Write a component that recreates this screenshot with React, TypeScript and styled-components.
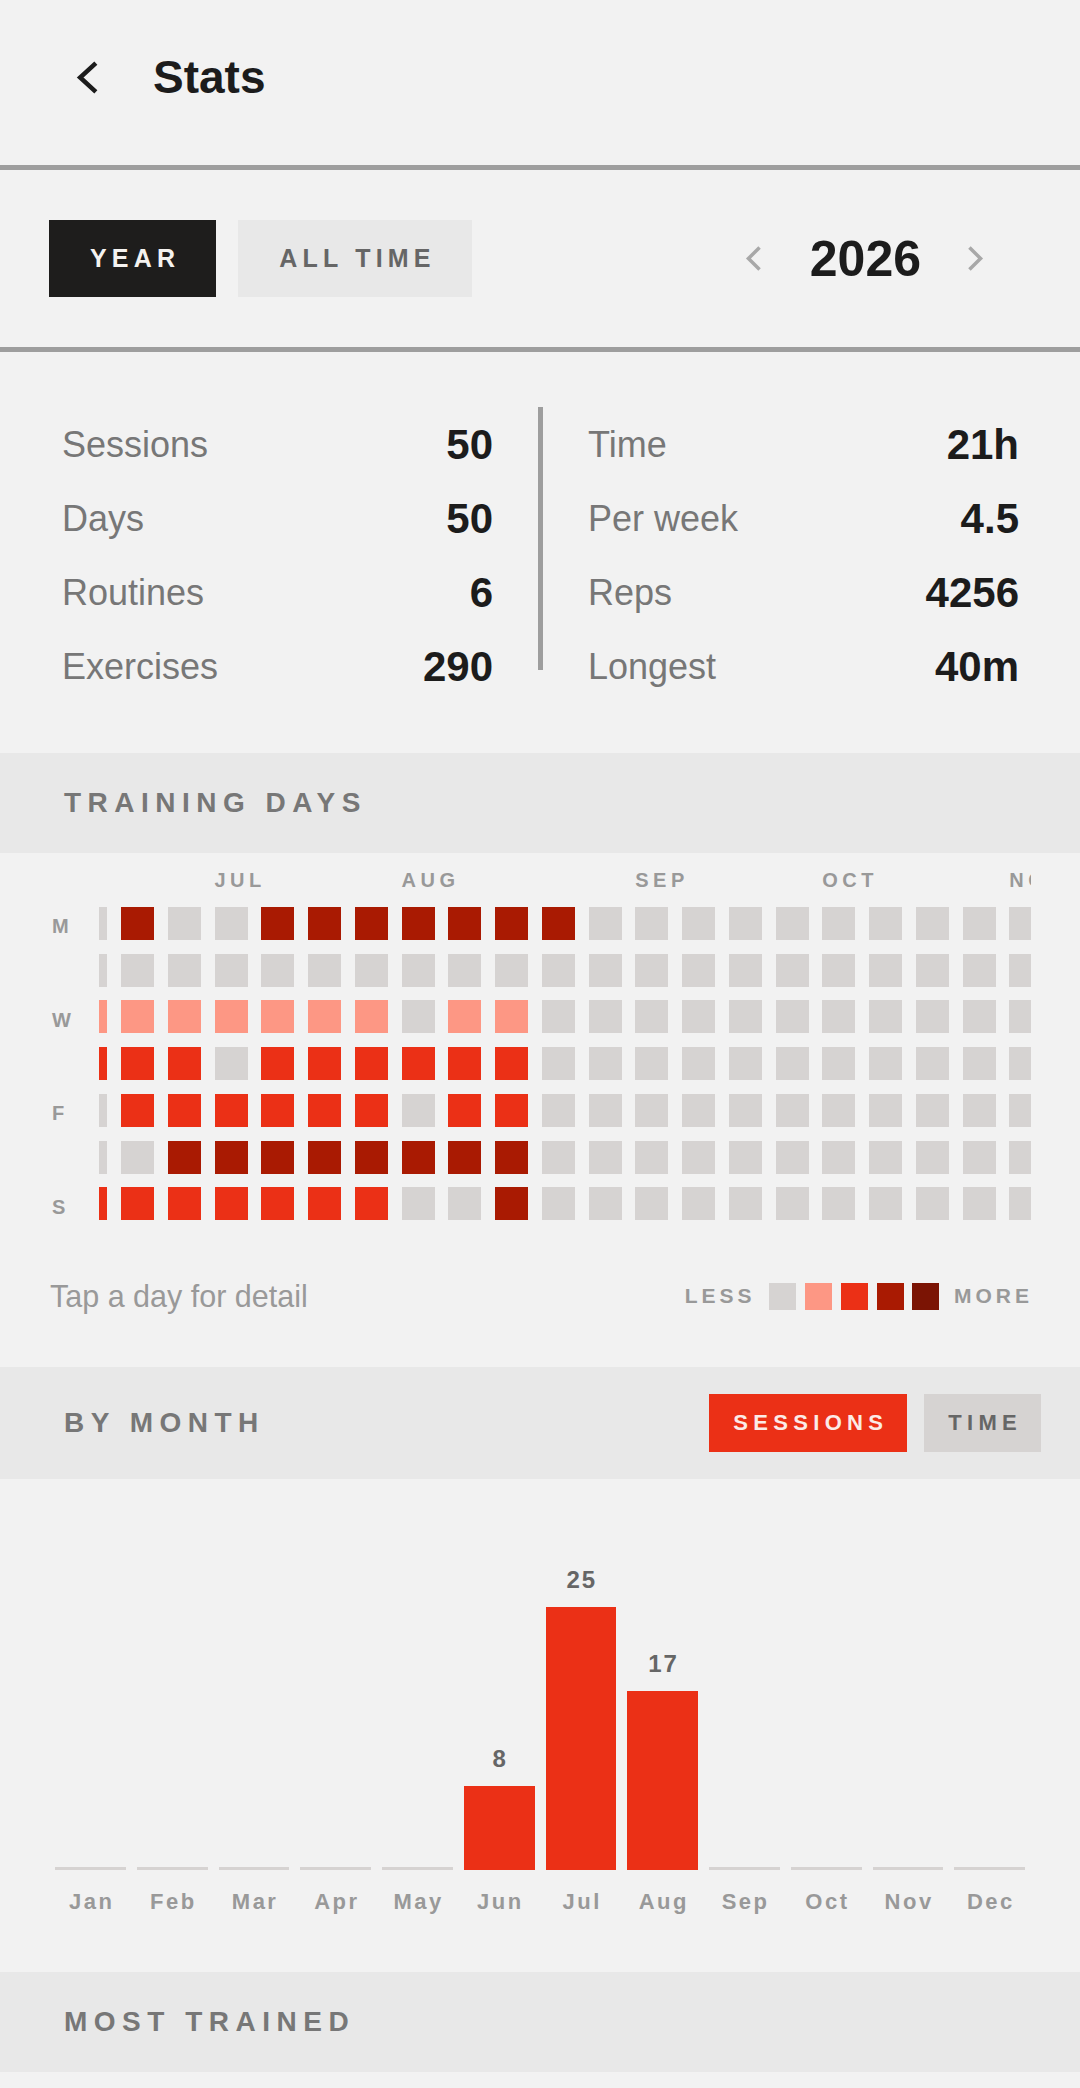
import React from 'react'
import styled, { createGlobalStyle } from 'styled-components'

const GlobalStyle = createGlobalStyle`
  html, body {
    margin: 0;
    padding: 0;
    background: #f2f2f2;
  }
  body {
    font-family: 'Liberation Sans', Arial, sans-serif;
    color: #1c1c1c;
  }
  * {
    box-sizing: border-box;
  }
`

const LEVEL_COLORS = ['#d6d3d2', '#fd9784', '#eb3016', '#a91a02', '#7b1404']

// one string per weekday (M..S), one char per week column; first and last are cut off by the scroller
const HEAT_ROWS = [
  '030033333330000000000',
  '000000000000000000000',
  '111111101100000000000',
  '222022222200000000000',
  '022222202200000000000',
  '003333333300000000000',
  '222222200300000000000',
]

const HEAT_MONTHS = [
  { label: 'JUL', col: 4 },
  { label: 'AUG', col: 8 },
  { label: 'SEP', col: 13 },
  { label: 'OCT', col: 17 },
  { label: 'NOV', col: 21 },
]

const DAY_LABELS = [
  { label: 'M', row: 2 },
  { label: 'W', row: 4 },
  { label: 'F', row: 6 },
  { label: 'S', row: 8 },
]

const MONTHS = [
  { name: 'Jan', value: 0 },
  { name: 'Feb', value: 0 },
  { name: 'Mar', value: 0 },
  { name: 'Apr', value: 0 },
  { name: 'May', value: 0 },
  { name: 'Jun', value: 8 },
  { name: 'Jul', value: 25 },
  { name: 'Aug', value: 17 },
  { name: 'Sep', value: 0 },
  { name: 'Oct', value: 0 },
  { name: 'Nov', value: 0 },
  { name: 'Dec', value: 0 },
]

const LEFT_STATS = [
  ['Sessions', '50'],
  ['Days', '50'],
  ['Routines', '6'],
  ['Exercises', '290'],
]

const RIGHT_STATS = [
  ['Time', '21h'],
  ['Per week', '4.5'],
  ['Reps', '4256'],
  ['Longest', '40m'],
]

const Page = styled.div`
  width: 1080px;
  min-height: 2088px;
  background: #f2f2f2;
`

const TopBar = styled.header`
  height: 170px;
  display: flex;
  align-items: center;
  padding: 0 0 11px 76px;
  border-bottom: 5px solid #9e9e9e;
`

const BackButton = styled.button`
  display: flex;
  padding: 0;
  border: 0;
  background: none;
  margin-right: 54px;
`

const Title = styled.h1`
  margin: 0;
  font-size: 46px;
  line-height: 1;
  font-weight: 700;
  color: #1c1c1c;
`

const FilterRow = styled.div`
  height: 182px;
  display: flex;
  align-items: center;
  justify-content: space-between;
  padding: 0 96px 0 49px;
  border-bottom: 5px solid #9e9e9e;
`

const PillGroup = styled.div`
  display: flex;
  gap: 22px;
`

const Pill = styled.button<{ $active?: boolean }>`
  height: 77px;
  padding: 0 36px 0 41px;
  border: 0;
  font-family: inherit;
  font-size: 25px;
  font-weight: 700;
  letter-spacing: 5.2px;
  background: ${({ $active }) => ($active ? '#1e1d1c' : '#e8e8e8')};
  color: ${({ $active }) => ($active ? '#f4f2f0' : '#666')};
`

const YearNav = styled.div`
  display: flex;
  align-items: center;
`

const YearLabel = styled.span`
  font-size: 50px;
  font-weight: 700;
  line-height: 1;
  margin: 0 46px 0 48px;
  color: #1c1c1c;
`

const StatsGrid = styled.section`
  display: grid;
  grid-template-columns: 1fr 5px 1fr;
  column-gap: 45px;
  padding: 56px 61px 49px 62px;
`

const StatColumn = styled.div`
  display: grid;
  grid-auto-rows: 74px;
`

const StatRow = styled.div`
  display: flex;
  align-items: center;
  justify-content: space-between;
`

const StatLabel = styled.span`
  font-size: 36px;
  color: #777;
`

const StatValue = styled.span`
  font-size: 42px;
  font-weight: 700;
  color: #1c1c1c;
`

const VDivider = styled.div`
  align-self: start;
  height: 263px;
  margin-top: -1px;
  background: #9e9e9e;
`

const Band = styled.div<{ $tall?: boolean }>`
  min-height: 100px;
  display: flex;
  align-items: center;
  justify-content: space-between;
  padding: ${({ $tall }) => ($tall ? '27px 39px 27px 64px' : '0 39px 0 64px')};
  background: #e8e8e8;
`

const BandTitle = styled.h2`
  margin: 0;
  font-size: 28px;
  font-weight: 700;
  letter-spacing: 6.5px;
  color: #777;
`

const HeatSection = styled.section`
  padding: 14px 49px 51px 50px;
`

const HeatBody = styled.div`
  display: flex;
`

const DayColumn = styled.div`
  width: 49px;
  flex-shrink: 0;
  display: grid;
  grid-template-rows: 26px repeat(7, 33px);
  row-gap: 13.75px;
`

const DayLabel = styled.span<{ $row: number }>`
  grid-row: ${({ $row }) => $row};
  display: flex;
  align-items: center;
  padding: 7px 0 0 2px;
  font-size: 20px;
  font-weight: 700;
  color: #999;
`

const HeatScroller = styled.div`
  flex: 1;
  overflow: hidden;
`

const HeatGrid = styled.div`
  display: grid;
  grid-template-columns: repeat(21, 33px);
  grid-template-rows: 26px repeat(7, 33px);
  gap: 13.75px;
  width: max-content;
  margin-left: -24.75px;
`

const MonthTag = styled.span<{ $col: number }>`
  grid-row: 1;
  grid-column: ${({ $col }) => $col};
  align-self: center;
  white-space: nowrap;
  font-size: 20px;
  font-weight: 700;
  letter-spacing: 4.5px;
  color: #999;
`

const Cell = styled.div<{ $level: number }>`
  width: 33px;
  height: 33px;
  background: ${({ $level }) => LEVEL_COLORS[$level]};
`

const HeatFooter = styled.div`
  height: 40px;
  margin-top: 55.75px;
  display: flex;
  align-items: center;
  justify-content: space-between;
`

const Hint = styled.span`
  font-size: 30.5px;
  color: #999;
`

const Legend = styled.div`
  display: flex;
  align-items: center;
  gap: 8.75px;
`

const LegendText = styled.span<{ $side: 'left' | 'right' }>`
  font-size: 21px;
  font-weight: 700;
  letter-spacing: 4px;
  color: #999;
  margin: ${({ $side }) => ($side === 'left' ? '0 5px 0 0' : '0 -2px 0 6px')};
`

const Swatch = styled.div<{ $level: number }>`
  width: 27px;
  height: 27px;
  background: ${({ $level }) => LEVEL_COLORS[$level]};
`

const SegGroup = styled.div`
  display: flex;
  gap: 17px;
`

const SegButton = styled.button<{ $active?: boolean }>`
  height: 58px;
  padding: 0 19px 0 24px;
  border: 0;
  font-family: inherit;
  font-size: 22px;
  font-weight: 700;
  letter-spacing: 5.3px;
  background: ${({ $active }) => ($active ? '#eb3016' : '#d6d3d2')};
  color: ${({ $active }) => ($active ? '#fcebe7' : '#666')};
`

const Chart = styled.section`
  padding: 61px 55px 55px;
`

const BarRow = styled.div`
  height: 330px;
  display: grid;
  grid-template-columns: repeat(12, 1fr);
  column-gap: 11px;
`

const BarColumn = styled.div`
  display: flex;
  flex-direction: column;
  justify-content: flex-end;
`

const BarValue = styled.span`
  margin-bottom: 13px;
  padding-left: 2px;
  text-align: center;
  font-size: 24px;
  line-height: 28px;
  font-weight: 700;
  letter-spacing: 2px;
  color: #666;
`

const Bar = styled.div<{ $empty: boolean }>`
  background: ${({ $empty }) => ($empty ? '#d6d3d2' : '#eb3016')};
`

const MonthRow = styled.div`
  margin-top: 17px;
  display: grid;
  grid-template-columns: repeat(12, 1fr);
  column-gap: 11px;
`

const MonthName = styled.span`
  text-align: center;
  padding-left: 2.5px;
  font-size: 22px;
  line-height: 30px;
  font-weight: 700;
  letter-spacing: 2.5px;
  color: #999;
`

const Chevron: React.FC<{ dir: 'left' | 'right'; color: string; w: number; h: number; stroke: number }> = ({
  dir,
  color,
  w,
  h,
  stroke,
}) => {
  const pad = stroke * 0.7
  const points =
    dir === 'left'
      ? `${w - pad},${pad} ${pad + 1},${h / 2} ${w - pad},${h - pad}`
      : `${pad},${pad} ${w - pad - 1},${h / 2} ${pad},${h - pad}`
  return (
    <svg width={w} height={h} viewBox={`0 0 ${w} ${h}`}>
      <polyline points={points} fill="none" stroke={color} strokeWidth={stroke} strokeLinejoin="miter" />
    </svg>
  )
}

const MAX_BAR = 263
const maxValue = Math.max(...MONTHS.map((m) => m.value))

const App: React.FC = () => {
  return (
    <Page>
      <GlobalStyle />
      <TopBar>
        <BackButton aria-label="Back">
          <Chevron dir="left" color="#1c1c1c" w={23} h={35} stroke={4.5} />
        </BackButton>
        <Title>Stats</Title>
      </TopBar>

      <FilterRow>
        <PillGroup>
          <Pill $active>YEAR</Pill>
          <Pill>ALL TIME</Pill>
        </PillGroup>
        <YearNav>
          <Chevron dir="left" color="#a8a8a8" w={17} h={27} stroke={3.5} />
          <YearLabel>2026</YearLabel>
          <Chevron dir="right" color="#a8a8a8" w={17} h={27} stroke={3.5} />
        </YearNav>
      </FilterRow>

      <StatsGrid>
        <StatColumn>
          {LEFT_STATS.map(([label, value]) => (
            <StatRow key={label}>
              <StatLabel>{label}</StatLabel>
              <StatValue>{value}</StatValue>
            </StatRow>
          ))}
        </StatColumn>
        <VDivider />
        <StatColumn>
          {RIGHT_STATS.map(([label, value]) => (
            <StatRow key={label}>
              <StatLabel>{label}</StatLabel>
              <StatValue>{value}</StatValue>
            </StatRow>
          ))}
        </StatColumn>
      </StatsGrid>

      <Band>
        <BandTitle>TRAINING DAYS</BandTitle>
      </Band>

      <HeatSection>
        <HeatBody>
          <DayColumn>
            {DAY_LABELS.map((d) => (
              <DayLabel key={d.row} $row={d.row}>
                {d.label}
              </DayLabel>
            ))}
          </DayColumn>
          <HeatScroller>
            <HeatGrid>
              {HEAT_MONTHS.map((m) => (
                <MonthTag key={m.label} $col={m.col}>
                  {m.label}
                </MonthTag>
              ))}
              {HEAT_ROWS.map((row, r) =>
                row.split('').map((lvl, c) => (
                  <Cell
                    key={`${r}-${c}`}
                    $level={Number(lvl)}
                    style={{ gridRow: r + 2, gridColumn: c + 1 }}
                  />
                ))
              )}
            </HeatGrid>
          </HeatScroller>
        </HeatBody>
        <HeatFooter>
          <Hint>Tap a day for detail</Hint>
          <Legend>
            <LegendText $side="left">LESS</LegendText>
            {[0, 1, 2, 3, 4].map((l) => (
              <Swatch key={l} $level={l} />
            ))}
            <LegendText $side="right">MORE</LegendText>
          </Legend>
        </HeatFooter>
      </HeatSection>

      <Band $tall>
        <BandTitle>BY MONTH</BandTitle>
        <SegGroup>
          <SegButton $active>SESSIONS</SegButton>
          <SegButton>TIME</SegButton>
        </SegGroup>
      </Band>

      <Chart>
        <BarRow>
          {MONTHS.map((m) => (
            <BarColumn key={m.name}>
              {m.value > 0 && <BarValue>{m.value}</BarValue>}
              <Bar
                $empty={m.value === 0}
                style={{ height: m.value > 0 ? Math.round((m.value / maxValue) * MAX_BAR) : 3 }}
              />
            </BarColumn>
          ))}
        </BarRow>
        <MonthRow>
          {MONTHS.map((m) => (
            <MonthName key={m.name}>{m.name}</MonthName>
          ))}
        </MonthRow>
      </Chart>

      <Band>
        <BandTitle>MOST TRAINED</BandTitle>
      </Band>
    </Page>
  )
}

export default App
